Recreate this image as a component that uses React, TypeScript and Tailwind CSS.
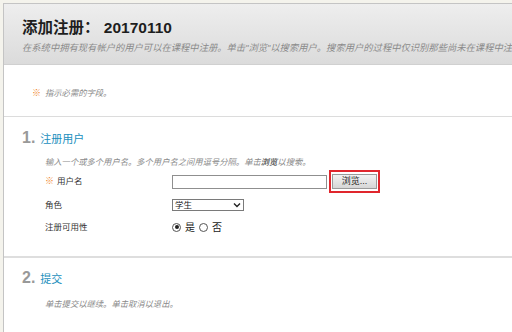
import React from "react";

const font = { fontFamily: '"Liberation Sans", "Noto Sans CJK SC", sans-serif' };

function Star() {
  return <span className="text-[#f0862a] text-[9px] font-bold leading-none not-italic">※</span>;
}

export default function App() {
  return (
    <div className="w-[512px] h-[332px] overflow-hidden bg-[#f4f3ec] pt-[3px] pl-[3px]" style={font}>
      <div className="h-full border-l border-t border-[#c4c4c4] bg-white flex flex-col">
        <div className="h-[61px] bg-gradient-to-b from-[#eeeeee] to-[#dbdbdb] border-b border-[#d0d0d0] pl-[18px] pt-[14px] overflow-hidden">
          <div className="text-[15.5px] font-bold text-[#1e1e1e] leading-[19px] whitespace-nowrap">添加注册： 20170110</div>
          <div className="mt-[5px] text-[9.3px] italic text-[#8a8a8a] whitespace-nowrap leading-[12px]">
            在系统中拥有现有帐户的用户可以在课程中注册。单击"浏览"以搜索用户。搜索用户的过程中仅识别那些尚未在课程中注册的用户。
          </div>
        </div>
        <div className="h-[52px] border-b border-[#dcdcdc] pl-[28px] pt-[6px] flex items-center gap-[4px]">
          <Star />
          <span className="text-[8.3px] italic text-[#8a8a8a]">指示必需的字段。</span>
        </div>
        <div className="h-[141px] border-b-2 border-[#dedede] pl-[18px] pt-[12px]">
          <div className="flex items-baseline gap-[5px]">
            <span className="text-[16px] font-bold text-[#999] leading-[18px]">1.</span>
            <span className="text-[11px] text-[#1b8fbd] leading-[18px]">注册用户</span>
          </div>
          <div className="pl-[23px]">
            <div className="mt-[8px] text-[8.3px] italic text-[#8a8a8a] leading-[12px]">
              输入一个或多个用户名。多个用户名之间用逗号分隔。单击<span className="font-bold text-[#666]">浏览</span>以搜索。
            </div>
            <div className="mt-[2px] flex items-center h-[23px]">
              <div className="w-[127px] flex items-center gap-[3px]">
                <Star />
                <span className="text-[8.5px] text-[#333]">用户名</span>
              </div>
              <div className="w-[155px] h-[14px] border border-[#8f8f8f] bg-white" />
              <div className="ml-[2px] border-2 border-[#e0262d] px-[1px] py-[2px]">
                <div className="w-[45px] h-[15px] border border-[#9a9a9a] bg-gradient-to-b from-[#f2f2f2] to-[#d6d6d6] text-[9px] text-[#222] flex items-center justify-center leading-none">
                  浏览...
                </div>
              </div>
            </div>
            <div className="mt-[3px] flex items-center h-[18px]">
              <div className="w-[127px] text-[8.5px] text-[#333]">角色</div>
              <div className="w-[72px] h-[12px] border border-[#7a7a7a] bg-white flex items-center justify-between px-[2px]">
                <span className="text-[8.5px] text-[#222] leading-none">学生</span>
                <svg width="8" height="6" viewBox="0 0 8 6"><path d="M1 1.5 L4 4.5 L7 1.5" fill="none" stroke="#222" strokeWidth="1.4" /></svg>
              </div>
            </div>
            <div className="mt-[4px] flex items-center h-[18px]">
              <div className="w-[127px] text-[8.5px] text-[#333]">注册可用性</div>
              <div className="flex items-center gap-[4px]">
                <span className="w-[9px] h-[9px] rounded-full border border-[#555] flex items-center justify-center">
                  <span className="w-[4px] h-[4px] rounded-full bg-[#222]" />
                </span>
                <span className="text-[10px] text-[#222]">是</span>
                <span className="w-[9px] h-[9px] rounded-full border border-[#555]" />
                <span className="text-[10px] text-[#222]">否</span>
              </div>
            </div>
          </div>
        </div>
        <div className="flex-1 pl-[18px] pt-[11px]">
          <div className="flex items-baseline gap-[5px]">
            <span className="text-[16px] font-bold text-[#999] leading-[18px]">2.</span>
            <span className="text-[11px] text-[#1b8fbd] leading-[18px]">提交</span>
          </div>
          <div className="pl-[23px] mt-[10px] text-[8.3px] italic text-[#8a8a8a] leading-[12px]">单击提交以继续。单击取消以退出。</div>
        </div>
      </div>
    </div>
  );
}
